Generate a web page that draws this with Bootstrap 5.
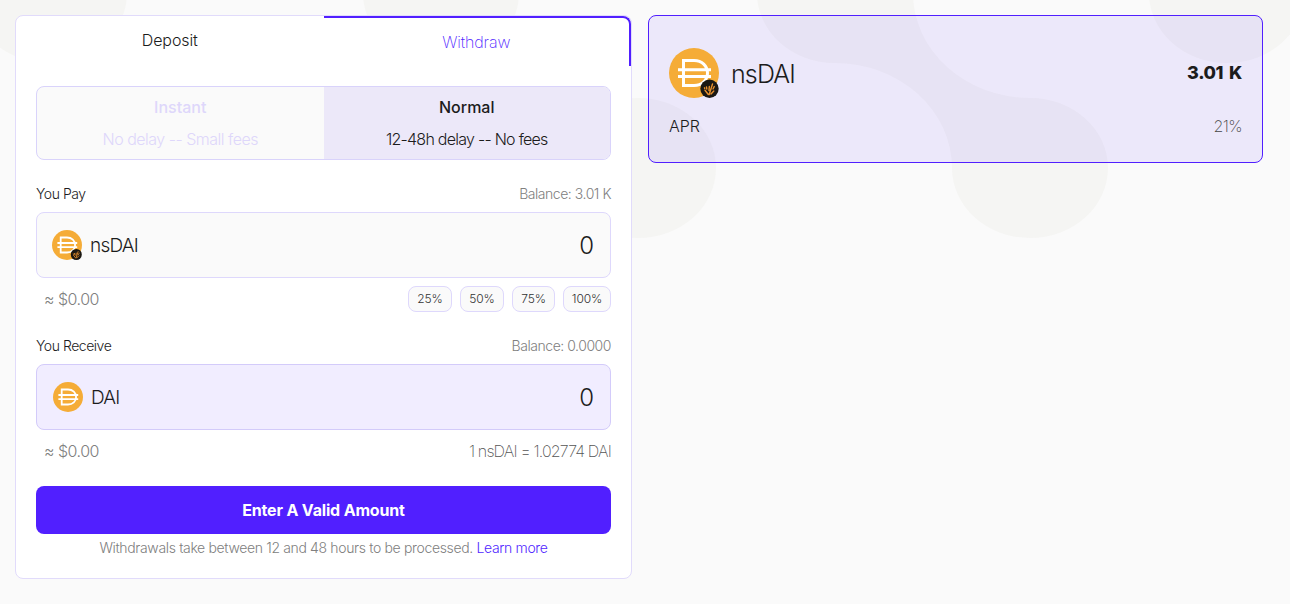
<!DOCTYPE html>
<html lang="en">
<head>
<meta charset="utf-8">
<meta name="viewport" content="width=device-width, initial-scale=1">
<title>Withdraw nsDAI</title>
<link href="https://cdn.jsdelivr.net/npm/bootstrap@5.3.0/dist/css/bootstrap.min.css" rel="stylesheet">
<style>
body{font-family:Inter,"Liberation Sans",sans-serif;font-weight:300;font-size:16px;line-height:24px;color:#1c1c1c;background:#fafafa;min-height:100vh;overflow:hidden}
.backdrop{z-index:-1;top:0;left:0}
.page{padding:15px 27px 0 15px;gap:16px}
.vault{width:617px;height:564px;border:1px solid #e1dbfb;border-radius:8px;background:#fff}
.tabs{height:50px}
.tab{padding-top:12px;text-align:center;color:#1c1c1c;letter-spacing:-.1px}
.tab-on{color:#511fff;border:solid #511fff;border-width:2px 2px 0 0;border-top-right-radius:8px;font-weight:200}
.panel{padding:20px 20px 0}
.modes{height:74px;border:1px solid #d9d3fb;border-radius:8px;overflow:hidden;background:#fafafa}
.mode{padding-top:8px;text-align:center;display:flex;flex-direction:column;gap:8px;color:#ded7fb}
.mode b{font-weight:500}
.mode div{letter-spacing:-.5px}
.mode-on{background:#ece8f9;color:#1c1c1c}
.mode-on div{letter-spacing:-.74px}
.caption-row{font-size:14px;line-height:20px;margin-top:24px;margin-bottom:8px;letter-spacing:-.46px}
.dim{color:#808080}
.field{height:66px;border:1px solid #ded8fc;border-radius:8px;background:#fafafa;padding:0 16px 0 15px}
.field-out{background:#f1edff;border-color:#d3cbfa;padding-left:16px}
.token{font-size:19px;margin-left:8px;letter-spacing:-.78px;padding-top:2px}
.amount{font-size:24px;padding-top:2px}
.under{height:26px;margin-top:8px;padding-left:8px}
.worth{letter-spacing:-.5px;padding-bottom:1px}
.rate{letter-spacing:-.84px;font-weight:200;color:#555;padding-bottom:1px}
.pct{height:26px;line-height:24px;border:1px solid #ded8fc;border-radius:8px;background:#fafafa;font-size:12px;padding:0;width:44px;font-weight:300;color:#333;text-align:center;letter-spacing:-.1px}
.pct:nth-child(3){width:43px}
.pct:last-child{width:48px}
.submit{height:48px;margin-top:22px;border:0;border-radius:8px;background:#511fff;color:#fff;font-weight:700;font-size:16px;width:100%;letter-spacing:-.17px}
.note{font-size:14px;line-height:20px;margin-top:4px;text-align:center;color:#808080;letter-spacing:-.35px}
.note a{color:#511fff;text-decoration:none}
.summary{height:148px;border:1px solid #511fff;border-radius:8px;background:rgba(81,31,255,.08);padding:32px 20px 0}
.summary .name{font-size:25px;margin-left:12px;letter-spacing:-.85px;padding-top:1px}
.summary .value{font-size:18px;font-weight:800;letter-spacing:-.4px;word-spacing:2.4px}
.apr{font-weight:200;color:#444;letter-spacing:-.6px}
</style>
</head>
<body>
<svg class="backdrop position-absolute" width="1290" height="604" aria-hidden="true">
  <g fill="#f5f5f3">
    <ellipse cx="49" cy="-7" rx="78" ry="70"/><ellipse cx="441" cy="-7" rx="78" ry="70"/>
    <ellipse cx="638" cy="168" rx="78" ry="70"/><ellipse cx="1227" cy="-7" rx="78" ry="70"/>
    <path d="M757-7A78 70 0 0 0 835 63A117 105 0 0 1 952 168A78 70 0 0 0 1108 168A78 70 0 0 0 1030 98A117 105 0 0 1 913-7Z"/>
  </g>
</svg>
<svg class="d-none">
  <symbol id="dai" viewBox="0 0 50 50">
    <circle cx="25" cy="25" r="25" fill="#f5ac37"/>
    <path d="M14.500 12.500H25C33 12.500 38.500 18 38.500 25S33 37.500 25 37.500H14.500ZM9 21.700H42M9 28.500H42" fill="none" stroke="#fff" stroke-width="3"/>
  </symbol>
  <symbol id="nsdai" viewBox="0 0 50 50">
    <use href="#dai" width="50" height="50"/>
    <circle cx="40.500" cy="40.800" r="9.200" fill="#1b1813"/>
    <path d="M39.300 46.500L36 42.300M40.200 46.500L43.500 36M37.800 41L37.500 39M40 42.500L40.300 38.500M42 46L44.800 43M44 41L45.300 38.500M35.700 40.500L35.500 39.800" fill="none" stroke="#e8902d" stroke-width="1.400" stroke-linecap="round"/>
  </symbol>
</svg>
<main class="page d-flex align-items-start">
  <section class="vault flex-shrink-0">
    <div class="tabs d-flex">
      <div class="tab w-50">Deposit</div>
      <div class="tab tab-on w-50">Withdraw</div>
    </div>
    <div class="panel">
      <div class="modes d-flex">
        <div class="mode w-50"><b>Instant</b><div>No delay -- Small fees</div></div>
        <div class="mode mode-on w-50"><b>Normal</b><div>12-48h delay -- No fees</div></div>
      </div>
      <div class="caption-row d-flex justify-content-between"><span>You Pay</span><span class="dim">Balance: 3.01 K</span></div>
      <div class="field d-flex align-items-center">
        <svg width="30" height="30"><use href="#nsdai"/></svg><span class="token">nsDAI</span><span class="amount ms-auto">0</span>
      </div>
      <div class="under d-flex align-items-center justify-content-between">
        <span class="worth dim">≈ $0.00</span>
        <div class="d-flex gap-2"><button class="pct">25%</button><button class="pct">50%</button><button class="pct">75%</button><button class="pct">100%</button></div>
      </div>
      <div class="caption-row d-flex justify-content-between"><span>You Receive</span><span class="dim">Balance: 0.0000</span></div>
      <div class="field field-out d-flex align-items-center">
        <svg width="30" height="30"><use href="#dai"/></svg><span class="token">DAI</span><span class="amount ms-auto">0</span>
      </div>
      <div class="under d-flex align-items-center justify-content-between">
        <span class="worth dim">≈ $0.00</span><span class="rate">1 nsDAI = 1.02774 DAI</span>
      </div>
      <button class="submit">Enter A Valid Amount</button>
      <div class="note">Withdrawals take between 12 and 48 hours to be processed. <a href="#">Learn more</a></div>
    </div>
  </section>
  <section class="summary flex-grow-1">
    <div class="d-flex align-items-center">
      <svg width="50" height="50"><use href="#nsdai"/></svg><span class="name">nsDAI</span><span class="value ms-auto">3.01 K</span>
    </div>
    <div class="d-flex justify-content-between mt-3"><span>APR</span><span class="apr">21%</span></div>
  </section>
</main>
<script src="https://cdn.jsdelivr.net/npm/bootstrap@5.3.0/dist/js/bootstrap.bundle.min.js"></script>
</body>
</html>
